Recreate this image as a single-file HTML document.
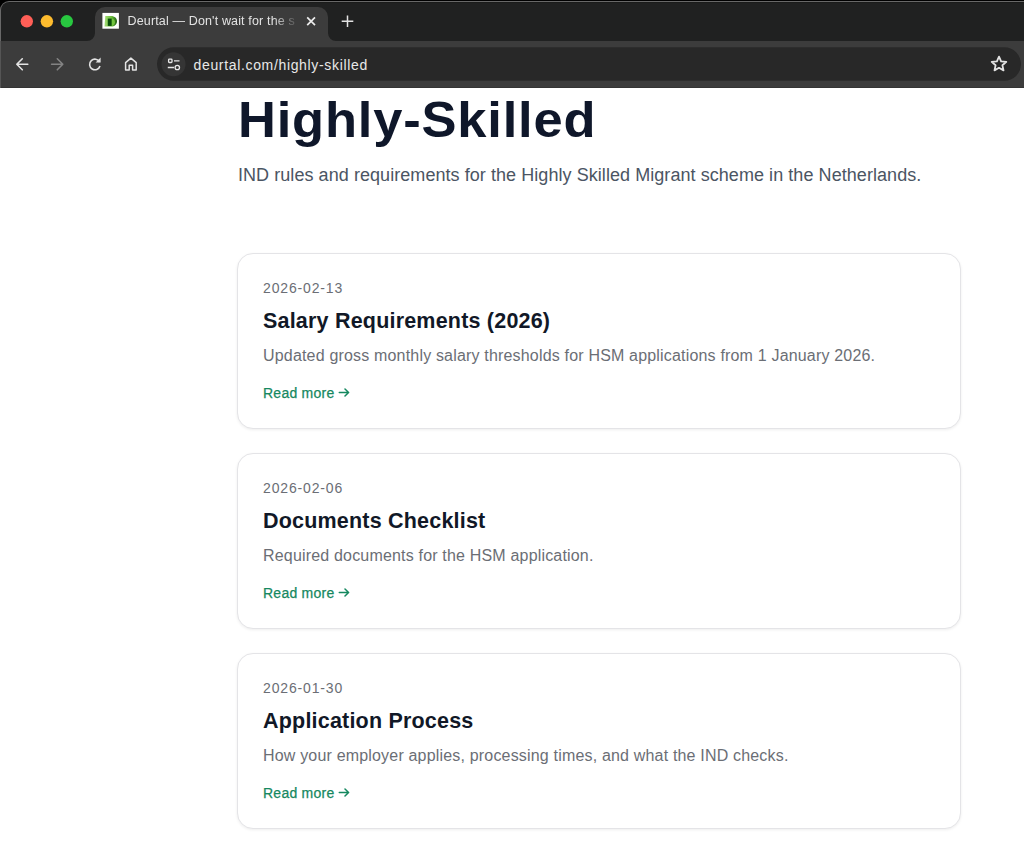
<!DOCTYPE html>
<html><head><meta charset="utf-8">
<style>
*{margin:0;padding:0;box-sizing:border-box}
html,body{width:1024px;height:845px;overflow:hidden;background:#fff}
body{font-family:"Liberation Sans",sans-serif;position:relative}
.chrome{position:absolute;left:0;top:0;width:1024px;height:88px}
.abs{position:absolute;white-space:nowrap}
.page{position:absolute;left:0;top:88px;width:1024px;height:757px;background:#fff}
.card{position:absolute;left:237px;width:724px;height:176px;border:1px solid #e4e4e7;border-radius:16px;box-shadow:0 1px 3px rgba(0,0,0,.07);background:#fff}
.card .abs{left:25px}
.date{font-size:14px;letter-spacing:.85px;color:#6b6e75}
.ttl{font-size:21.5px;font-weight:bold;letter-spacing:.2px;color:#111827}
.desc{font-size:16px;letter-spacing:.18px;color:#6b6e75}
.more{font-size:14px;letter-spacing:.25px;color:#16885f;-webkit-text-stroke:.25px #16885f}
.arr{position:absolute;left:313px;top:0;width:12px;height:10px}
</style></head><body>
<svg class="chrome" width="1024" height="88" viewBox="0 0 1024 88">
  <rect x="0" y="0" width="1024" height="88" fill="#000"/>
  <path d="M0 88 V10 A9 9 0 0 1 9 1 H1024 V88 Z" fill="#686868"/>
  <path d="M1 88 V10 A8 8 0 0 1 9 2 H1024 V88 Z" fill="#202121"/>
  <rect x="9" y="2" width="1015" height="1" fill="#1a1b1a"/>
  <!-- tab -->
  <path d="M87 41 A8 8 0 0 0 95 33 V17 A10 10 0 0 1 105 7 H318 A10 10 0 0 1 328 17 V33 A8 8 0 0 0 336 41 Z" fill="#3c3c3c"/>
  <!-- toolbar -->
  <rect x="1" y="41" width="1023" height="47" fill="#3c3c3c"/>
  <rect x="0" y="41" width="1" height="47" fill="#555"/>
  <rect x="1" y="87" width="1023" height="1" fill="#343434"/>
  <!-- traffic lights -->
  <circle cx="26.8" cy="21.3" r="6.2" fill="#ff5f57"/>
  <circle cx="46.9" cy="21.3" r="6.2" fill="#febc2e"/>
  <circle cx="66.8" cy="21.3" r="6.2" fill="#28c840"/>
  <!-- favicon -->
  <defs><linearGradient id="fg" x1="0" y1="0" x2="1" y2="0"><stop offset="0" stop-color="#a6dc78"/><stop offset=".55" stop-color="#6cc13c"/><stop offset="1" stop-color="#1f5e10"/></linearGradient></defs>
  <rect x="102.4" y="12.9" width="16.5" height="15.8" fill="#fff"/>
  <path d="M104.5 26.6 L105.3 16 H110.8 C114.8 16 117 18.4 117 21.3 C117 24.3 114.8 26.6 110.8 26.6 Z" fill="url(#fg)"/>
  <rect x="107.8" y="18.6" width="4" height="7.3" fill="#0a4d0a"/>
  <path d="M111.8 18.6 C114 19 114.9 20.6 114.9 22.3 C114.9 24.4 113.6 25.9 111.8 25.9 Z" fill="#72c43e"/>
  <!-- tab close -->
  <path d="M307.2 17.3 L315 25.1 M315 17.3 L307.2 25.1" stroke="#ececec" stroke-width="1.7"/>
  <!-- new tab plus -->
  <path d="M347.5 15.5 V27 M341.7 21.3 H353.3" stroke="#e3e3e3" stroke-width="1.5"/>
  <!-- back -->
  <path d="M27.8 64.3 H16.8 M22.3 58.8 L16.8 64.3 L22.3 69.8" fill="none" stroke="#e3e3e3" stroke-width="1.6" stroke-linecap="round" stroke-linejoin="round"/>
  <!-- forward -->
  <path d="M51.6 64.3 H62.8 M57.3 58.8 L62.8 64.3 L57.3 69.8" fill="none" stroke="#838383" stroke-width="1.6" stroke-linecap="round" stroke-linejoin="round"/>
  <!-- reload -->
  <path d="M99.6 62 A5.3 5.3 0 1 0 100 66" fill="none" stroke="#e3e3e3" stroke-width="1.6"/>
  <path d="M100.6 57.6 V62.6 H95.6 Z" fill="#e3e3e3"/>
  <!-- home -->
  <path d="M125.6 70.1 V62.6 L130.9 58.1 L136.2 62.6 V70.1 H132.6 V65.3 H129.2 V70.1 Z" fill="none" stroke="#e3e3e3" stroke-width="1.5" stroke-linejoin="round"/>
  <!-- omnibox -->
  <rect x="157" y="47.3" width="864" height="33.5" rx="16.75" fill="#282828"/>
  <circle cx="173.5" cy="64.3" r="12" fill="#353535"/>
  <!-- tune icon -->
  <rect x="168.6" y="59.1" width="3.4" height="3.4" rx="0.8" fill="none" stroke="#e8e8e8" stroke-width="1.3"/>
  <path d="M174 60.8 H179.5 M167.8 67.5 H174" stroke="#e8e8e8" stroke-width="1.3"/>
  <circle cx="177.3" cy="67.5" r="2.2" fill="none" stroke="#e8e8e8" stroke-width="1.3"/>
  <!-- star -->
  <path d="M999 56.6 L1001.1 61.4 L1006.3 61.9 L1002.4 65.3 L1003.5 70.4 L999 67.8 L994.5 70.4 L995.6 65.3 L991.7 61.9 L996.9 61.4 Z" fill="none" stroke="#e3e3e3" stroke-width="1.8" stroke-linejoin="round"/>
</svg>
<div class="abs" style="left:127.5px;top:13.6px;font-size:12.5px;letter-spacing:.15px;color:#e3e3e3;width:172px;overflow:hidden;-webkit-mask-image:linear-gradient(90deg,#000 84%,transparent 100%)">Deurtal — Don't wait for the s</div>
<div class="abs" style="left:193.5px;top:56.5px;font-size:14px;letter-spacing:.66px;color:#e8e8e8">deurtal.com/highly-skilled</div>

<div class="page">
  <div class="abs" style="left:238px;top:2.6px;font-size:50px;font-weight:bold;letter-spacing:.76px;transform:scaleX(1.05);transform-origin:0 0;color:#0f172a">Highly-Skilled</div>
  <div class="abs" style="left:238px;top:77px;font-size:18px;letter-spacing:.06px;color:#4b5563">IND rules and requirements for the Highly Skilled Migrant scheme in the Netherlands.</div>
  <div class="card" style="top:165px">
    <div class="abs date" style="top:26px">2026-02-13</div>
    <div class="abs ttl" style="top:54.5px">Salary Requirements (2026)</div>
    <div class="abs desc" style="top:92.7px">Updated gross monthly salary thresholds for HSM applications from 1 January 2026.</div>
    <div class="abs more" style="top:130.6px">Read more</div>
    <svg class="abs" style="left:100px;top:134px" width="12" height="10" viewBox="0 0 12 10"><path d="M1.3 4.5 H10.6 M7 1 L10.6 4.5 L7 8" fill="none" stroke="#16885f" stroke-width="1.5" stroke-linecap="round" stroke-linejoin="round"/></svg>
  </div>
  <div class="card" style="top:365px">
    <div class="abs date" style="top:26px">2026-02-06</div>
    <div class="abs ttl" style="top:54.5px">Documents Checklist</div>
    <div class="abs desc" style="top:92.7px">Required documents for the HSM application.</div>
    <div class="abs more" style="top:130.6px">Read more</div>
    <svg class="abs" style="left:100px;top:134px" width="12" height="10" viewBox="0 0 12 10"><path d="M1.3 4.5 H10.6 M7 1 L10.6 4.5 L7 8" fill="none" stroke="#16885f" stroke-width="1.5" stroke-linecap="round" stroke-linejoin="round"/></svg>
  </div>
  <div class="card" style="top:565px">
    <div class="abs date" style="top:26px">2026-01-30</div>
    <div class="abs ttl" style="top:54.5px">Application Process</div>
    <div class="abs desc" style="top:92.7px">How your employer applies, processing times, and what the IND checks.</div>
    <div class="abs more" style="top:130.6px">Read more</div>
    <svg class="abs" style="left:100px;top:134px" width="12" height="10" viewBox="0 0 12 10"><path d="M1.3 4.5 H10.6 M7 1 L10.6 4.5 L7 8" fill="none" stroke="#16885f" stroke-width="1.5" stroke-linecap="round" stroke-linejoin="round"/></svg>
  </div>
</div>
</body></html>
